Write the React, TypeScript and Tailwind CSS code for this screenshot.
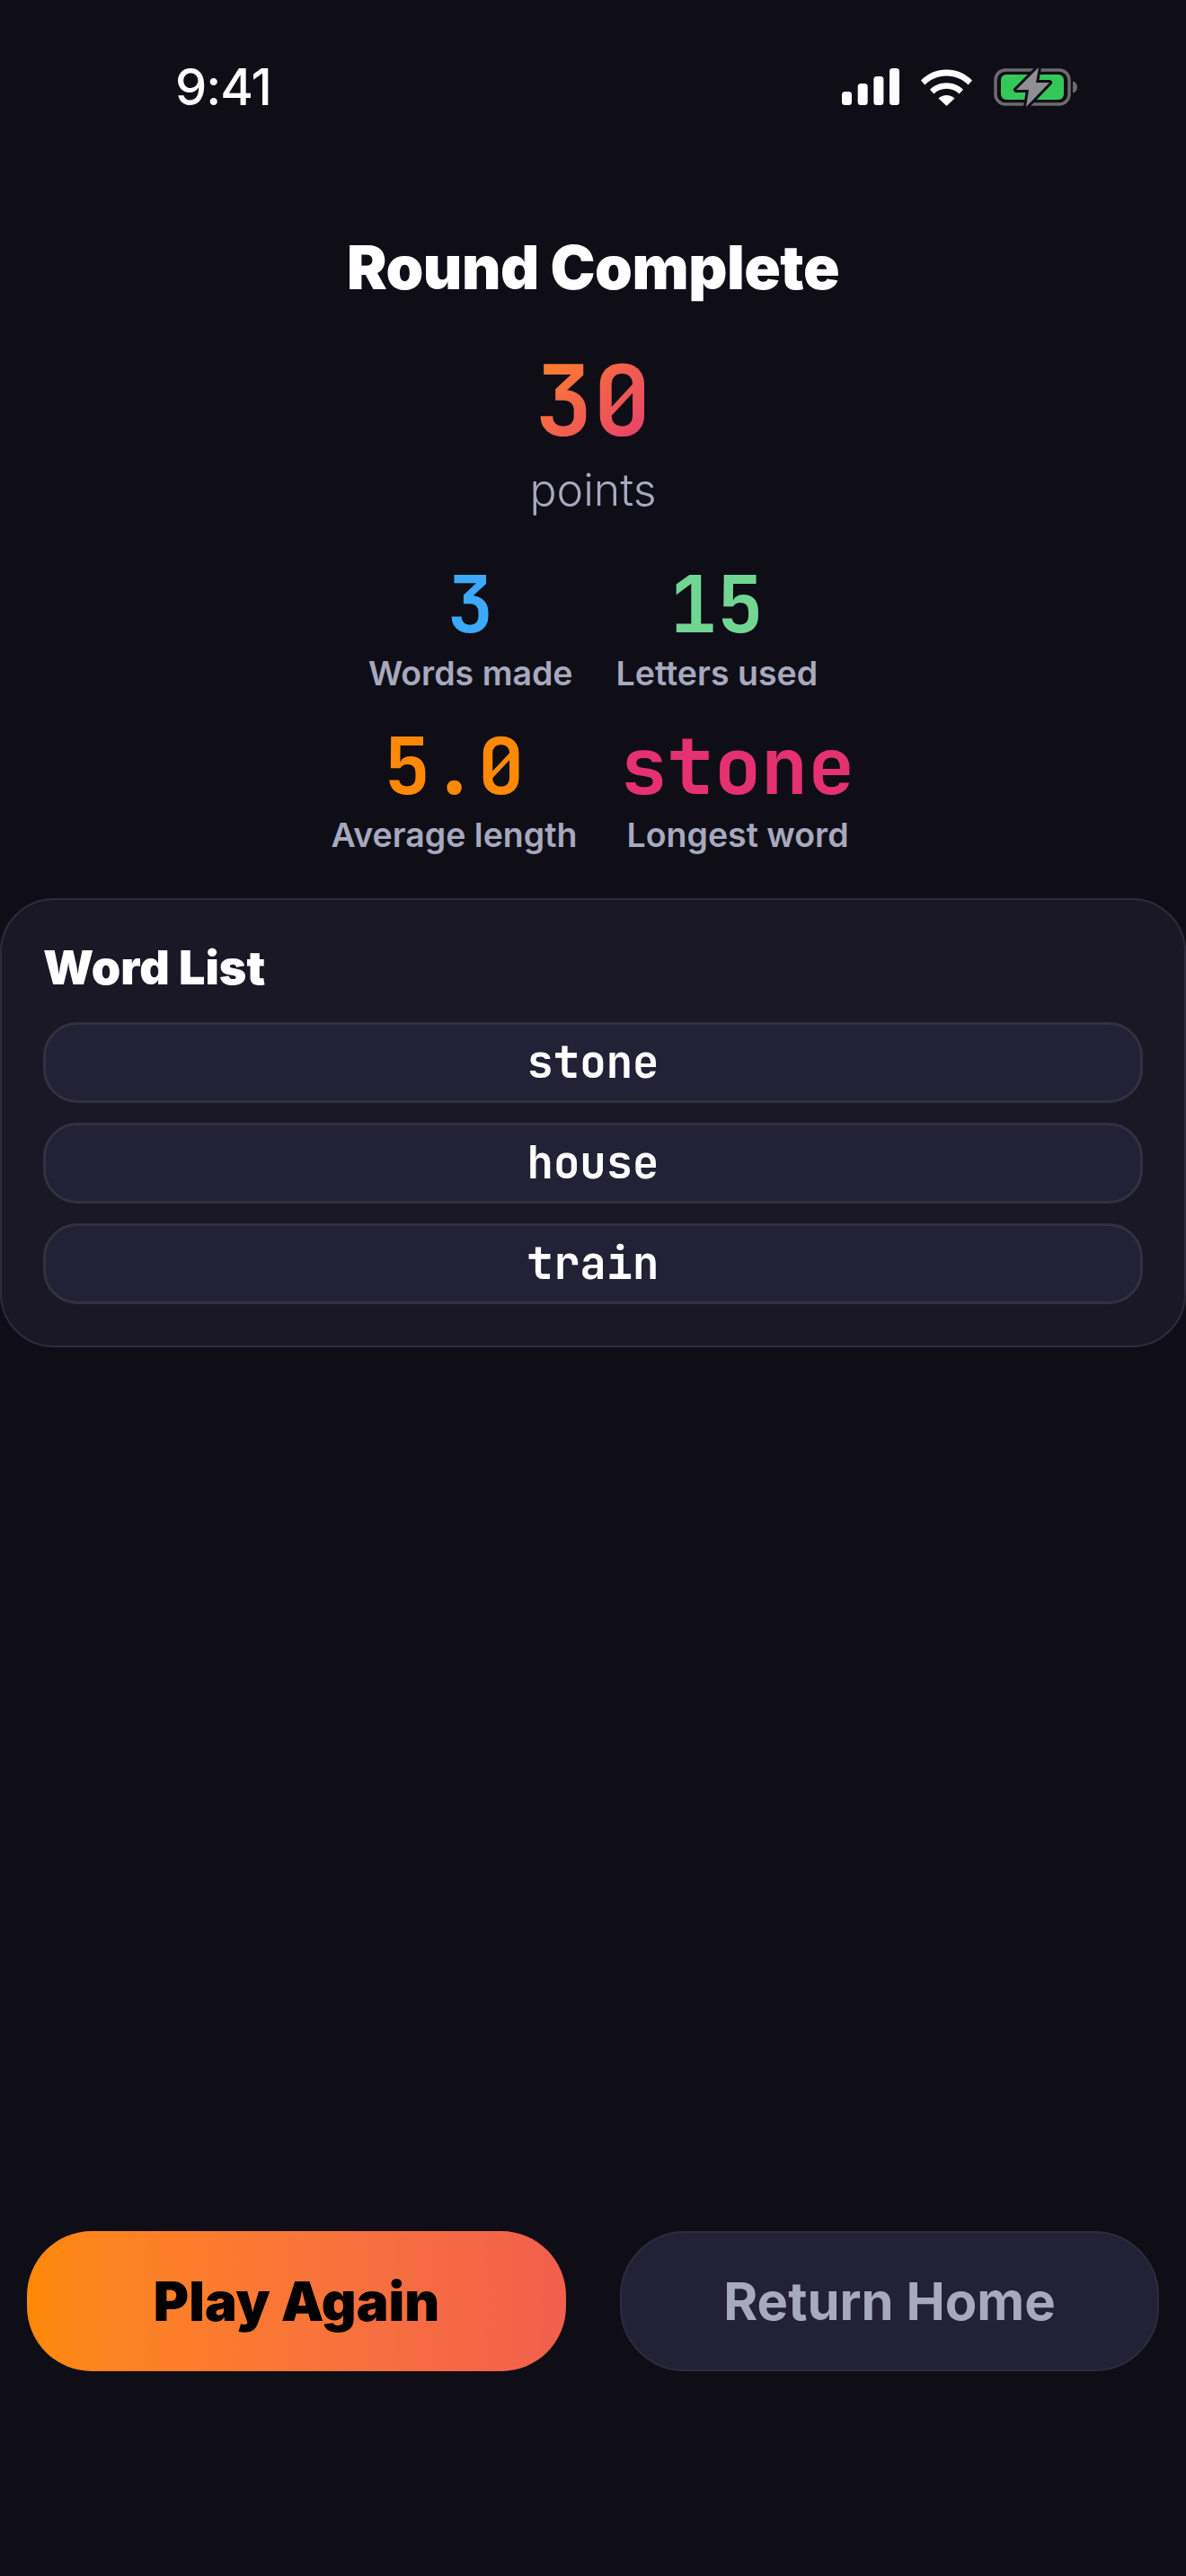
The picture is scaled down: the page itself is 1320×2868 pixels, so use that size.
const mono = "font-['JetBrains_Mono','DejaVu_Sans_Mono',monospace] [font-feature-settings:'zero'_1]";

function StatusIcons() {
  return (
    <div className="flex items-center">
      <svg width="66" height="44" viewBox="0 0 66 44" className="text-white" fill="currentColor">
        <rect x="1" y="27" width="11" height="15" rx="3.5" />
        <rect x="18.7" y="18" width="11" height="24" rx="3.5" />
        <rect x="36.4" y="10" width="11" height="32" rx="3.5" />
        <rect x="54" y="1" width="11" height="41" rx="3.5" />
      </svg>
      <svg width="60" height="44" viewBox="0 0 60 44" className="ml-[22px]" fill="white">
        <path d="M1 14.5C8.5 6.8 18.6 2.5 29.5 2.5S50.5 6.8 58 14.5L53.6 19.6C47.4 13.3 38.8 9.6 29.5 9.6S11.6 13.3 5.4 19.6Z" />
        <path d="M11 24.8C15.9 19.9 22.4 17.2 29.5 17.2S43.1 19.9 48 24.8L43.6 29.6C40 25.9 35 23.8 29.5 23.8S19 25.9 15.4 29.6Z" />
        <path d="M20.5 34.5C22.9 32.2 26.1 30.9 29.5 30.9S36.1 32.2 38.5 34.5L29.5 43Z" />
      </svg>
      <svg width="94" height="46" viewBox="0 0 94 46" className="ml-[22px]">
        <rect x="2" y="4" width="82" height="38" rx="11" fill="none" stroke="#6b6b70" strokeWidth="3.5" />
        <rect x="8" y="9" width="70" height="28" rx="6" fill="#34c759" />
        <path d="M88 16.5C91 17.2 93 19.8 93 23S91 28.8 88 29.5Z" fill="#6b6b70" />
        <path d="M50 1 L25 26 H39 L36 45 L62 18 H47 Z" fill="#8e8e93" stroke="#0f0e17" strokeWidth="6" strokeLinejoin="round" paintOrder="stroke" />
      </svg>
    </div>
  );
}

function Stat({ value, label, color }: { value: string; label: string; color: string }) {
  return (
    <div className="flex flex-col items-center">
      <div className={`${mono} text-[87px] leading-[100px] font-bold ${color}`}>{value}</div>
      <div className="mt-[2px] text-[37.5px] leading-[50px] font-semibold text-[#a7a9be]">{label}</div>
    </div>
  );
}

export default function App() {
  const words = ["stone", "house", "train"];
  return (
    <div className="flex h-[2868px] w-[1320px] flex-col overflow-hidden bg-[#0f0e17] font-['Inter',sans-serif]">
      {/* status bar */}
      <div className="flex h-[130px] items-center justify-between pt-[64px] pr-[120px] pl-[195px]">
        <span className="text-[56px] leading-[66px] font-medium tracking-[-1px] text-white">9:41</span>
        <StatusIcons />
      </div>

      <h1 className="mt-[128px] text-center text-[67px] leading-[80px] font-black tracking-[-0.5px] text-white">
        Round Complete
      </h1>

      <div className="mt-[43px] flex flex-col items-center">
        <div
          className={`${mono} bg-gradient-to-br from-[#ff8906] via-[#f25f4c] to-[#e53170] bg-clip-text text-[108px] leading-[130px] font-bold text-transparent`}
        >
          30
        </div>
        <div className="mt-[2px] text-[50px] leading-[64px] font-light text-[#a7a9be]">points</div>
      </div>

      <div className="mt-[46px] flex justify-center gap-[48px]">
        <Stat value="3" label="Words made" color="text-[#3da9fc]" />
        <Stat value="15" label="Letters used" color="text-[#72d693]" />
      </div>
      <div className="mt-[28px] flex justify-center gap-[48px]">
        <Stat value="5.0" label="Average length" color="text-[#ff8906]" />
        <Stat value="stone" label="Longest word" color="text-[#e53170]" />
      </div>

      {/* word list */}
      <div className="mt-[45px] rounded-[60px] border-2 border-[#2e2c3c] bg-[#1a1825] px-[46px] pt-[46px] pb-[46px]">
        <h2 className="text-[52px] leading-[60px] font-black text-white">Word List</h2>
        <div className="mt-[30px] flex flex-col gap-[22px]">
          {words.map((w) => (
            <div
              key={w}
              className={`flex h-[90px] items-center justify-center rounded-[38px] border-[3px] border-[#33313f] bg-[#232135] ${mono} text-[49px] font-semibold text-white`}
            >
              {w}
            </div>
          ))}
        </div>
      </div>

      <div className="mt-auto mb-[228px] flex justify-between px-[30px]">
        <button className="h-[156px] w-[600px] rounded-[72px] bg-gradient-to-r from-[#ff8906] to-[#f25f4c] text-[60px] font-black text-black">
          Play Again
        </button>
        <button className="h-[156px] w-[600px] rounded-[72px] border-2 border-[#2e2c3c] bg-[#232135] text-[58px] font-bold text-[#a7a9be]">
          Return Home
        </button>
      </div>
    </div>
  );
}
